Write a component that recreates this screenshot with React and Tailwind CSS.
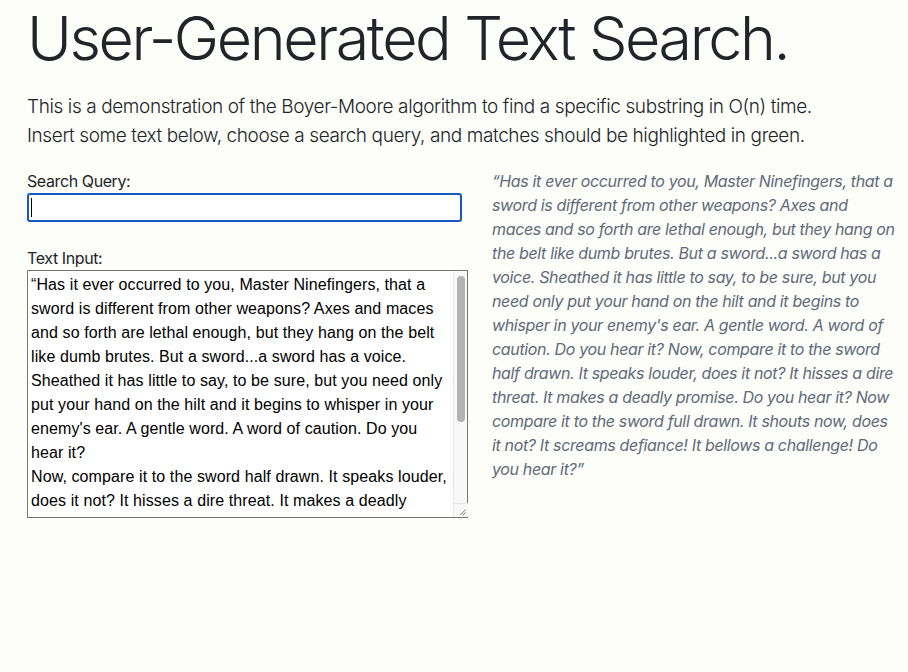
const passage = [
  '“Has it ever occurred to you, Master Ninefingers, that a sword is different from other weapons? Axes and maces and so forth are lethal enough, but they hang on the belt like dumb brutes. But a sword...a sword has a voice. Sheathed it has little to say, to be sure, but you need only put your hand on the hilt and it begins to whisper in your enemy\'s ear. A gentle word. A word of caution. Do you hear it?',
  'Now, compare it to the sword half drawn. It speaks louder, does it not? It hisses a dire threat. It makes a deadly promise. Do you hear it?',
  'Now compare it to the sword full drawn. It shouts now, does it not? It screams defiance! It bellows a challenge! Do you hear it?”',
]

function App() {
  return (
    <div className="min-h-screen bg-[#fdfdf9] pl-[27px] pr-[11px] pt-px font-['Inter',sans-serif] text-[#212529]">
      <h1 className="text-[61px] font-light leading-[1.22] tracking-[-2.4px]">
        User-Generated Text Search.
      </h1>
      <p className="mt-[17px] text-[19px] font-light leading-[29px] tracking-[-0.4px]">
        This is a demonstration of the Boyer-Moore algorithm to find a specific substring in O(n) time.
        <br />
        Insert some text below, choose a search query, and matches should be highlighted in green.
      </p>

      <div className="mt-[19px] flex gap-[24px]">
        <div className="w-[441px] shrink-0">
          <label className="block text-base leading-6 tracking-[-0.4px]">Search Query:</label>
          <div className="relative">
            <input
              type="text"
              className="block h-[29px] w-[435px] rounded-[3px] border-2 border-[#1558c4] bg-white px-1 outline-none caret-transparent"
            />
            <span className="absolute left-[4px] top-[5px] h-[19px] w-px bg-black" />
          </div>

          <label className="mt-[24px] block text-base leading-6 tracking-[-0.4px]">Text Input:</label>
          <div className="relative">
            <textarea
              readOnly
              defaultValue={passage.join('\n')}
              className="block h-[248px] w-[441px] resize-none overflow-hidden border border-[#767676] bg-white py-[2px] pl-[3px] pr-[15px] font-['Liberation_Sans',Arial,sans-serif] text-base leading-6 tracking-[0.1px] text-black outline-none"
            />
            {/* fake scrollbar + resize grip */}
            <div className="absolute bottom-px right-px top-px w-[14px] border-l border-[#e6e6e6] bg-[#f8f8f8]">
              <div className="absolute left-[3px] top-[5px] h-[146px] w-[8px] rounded-full bg-[#b3b3b3]" />
              <div className="absolute bottom-0 left-0 h-[14px] w-[14px] border-t border-[#e6e6e6] bg-[#f8f8f8]">
                <svg viewBox="0 0 14 14" className="h-full w-full">
                  <path d="M12 6 L6 12 M12 9 L9 12" stroke="#777" strokeWidth="1" />
                </svg>
              </div>
            </div>
          </div>
        </div>

        <p className="text-base italic leading-6 tracking-[-0.35px] text-[#5f6a7a]">
          {passage.join(' ')}
        </p>
      </div>
    </div>
  )
}

export default App
